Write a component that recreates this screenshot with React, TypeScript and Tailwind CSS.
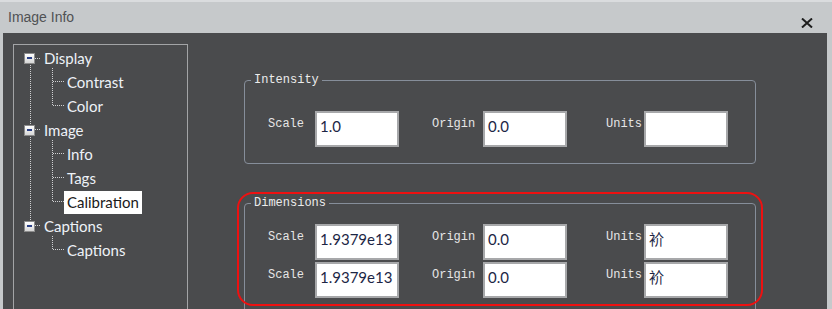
import { FC } from 'react';

const mono = { fontFamily: '"Liberation Mono", "DejaVu Sans Mono", monospace' };
const sans = { fontFamily: 'Lato, "Noto Sans", "Noto Sans CJK SC", sans-serif' };

type Node = { label: string; children: string[] };

const tree: Node[] = [
  { label: 'Display', children: ['Contrast', 'Color'] },
  { label: 'Image', children: ['Info', 'Tags', 'Calibration'] },
  { label: 'Captions', children: ['Captions'] },
];

const ExpandBox: FC = () => (
  <span className="w-[11px] h-[11px] border border-[#8c8c8c] bg-gradient-to-b from-[#ffffff] to-[#d6d6d6] flex items-center justify-center shrink-0">
    <span className="w-[5px] h-[2px] bg-[#2a3f86]" />
  </span>
);

// dotted connector lines of the tree view
const TreeLines: FC = () => {
  const dot = { stroke: '#cfd0d2', strokeWidth: 1, strokeDasharray: '1 1' };
  const childH = [37, 61, 109, 133, 157, 205];
  return (
    <svg className="absolute left-0 top-[-1px]" width="173" height="240" shapeRendering="crispEdges">
      <line x1="16.5" y1="19" x2="16.5" y2="176" {...dot} />
      {[14, 85, 181].map((y) => (
        <line key={y} x1="21" y1={y + 0.5} x2="27" y2={y + 0.5} {...dot} />
      ))}
      <line x1="38.5" y1="24" x2="38.5" y2="62" {...dot} />
      <line x1="38.5" y1="96" x2="38.5" y2="158" {...dot} />
      <line x1="38.5" y1="192" x2="38.5" y2="206" {...dot} />
      {childH.map((y) => (
        <line key={y} x1="39" y1={y + 0.5} x2="50" y2={y + 0.5} {...dot} />
      ))}
    </svg>
  );
};

const TreePanel: FC = () => (
  <div className="ml-[10px] mt-[11px] w-[175px] h-[300px] border border-[#a3a4a6] shrink-0">
    <div className="relative pt-[1px]" style={sans}>
      <TreeLines />
      {tree.map((node) => (
        <div key={node.label}>
          <div className="relative h-[24px] flex items-center pl-[10px]">
            <ExpandBox />
            <span className="ml-[6px] px-[3px] text-[15px] text-[#eef2f8] leading-[22px]">{node.label}</span>
          </div>
          {node.children.map((c) => (
            <div key={c} className="relative h-[24px] flex items-center pl-[50px]">
              <span
                className={
                  c === 'Calibration'
                    ? 'px-[3px] text-[15px] leading-[23px] bg-white text-[#1a1a1a]'
                    : 'px-[3px] text-[15px] leading-[23px] text-[#eef2f8]'
                }
              >
                {c}
              </span>
            </div>
          ))}
        </div>
      ))}
    </div>
  </div>
);

const Field: FC<{ value?: string }> = ({ value }) => (
  <div
    className="w-[84px] h-[36px] bg-white border-2 border-[#a7a8aa] flex items-center pl-[3px] pb-[6px] text-[15px] text-[#1c2645] shrink-0"
    style={sans}
  >
    {value}
  </div>
);

const Label: FC<{ text: string; className: string }> = ({ text, className }) => (
  <span className={'text-[12px] leading-[14px] text-[#e6e6e6] mb-[10px] shrink-0 ' + className} style={mono}>
    {text}
  </span>
);

const FieldRow: FC<{ scale: string; origin: string; units: string }> = ({ scale, origin, units }) => (
  <div className="flex items-center">
    <Label text="Scale" className="ml-[23px] w-[36px]" />
    <div className="ml-[11px]">
      <Field value={scale} />
    </div>
    <Label text="Origin" className="ml-[33px] w-[44px]" />
    <div className="ml-[7px]">
      <Field value={origin} />
    </div>
    <Label text="Units" className="ml-[39px] w-[36px]" />
    <div className="ml-[2px]">
      <Field value={units} />
    </div>
  </div>
);

const Group: FC<{ title: string; className: string; children: React.ReactNode }> = ({ title, className, children }) => (
  <fieldset className={'w-[512px] border border-[#868e9a] rounded-[4px] ' + className}>
    <legend className="ml-[6px] px-[3px] text-[12px] leading-[14px] text-[#ececec]" style={mono}>
      {title}
    </legend>
    {children}
  </fieldset>
);

export default function App() {
  return (
    <div className="relative w-[832px] h-[309px] bg-[#c6c9cb] overflow-hidden">
      <div className="h-[33px] border-t-2 border-[#dadcde] flex items-start justify-between">
        <span
          className="ml-[8px] mt-[7px] text-[14px] leading-[16px] text-[#505254]"
          style={{ fontFamily: '"Liberation Sans", Arial, sans-serif' }}
        >
          Image Info
        </span>
        <svg className="mr-[19px] mt-[16px]" width="12" height="10" viewBox="0 0 12 10">
          <path d="M1 0.5 L11 9.5 M11 0.5 L1 9.5" stroke="#1e1e1e" strokeWidth="2" />
        </svg>
      </div>
      <div className="ml-[3px] w-[824px] h-[276px] bg-[#4a4b4d] flex items-start">
        <TreePanel />
        <div className="ml-[56px] mt-[40px] flex flex-col">
          <Group title="Intensity" className="pt-[24px] pb-[16px]">
            <FieldRow scale="1.0" origin="0.0" units="" />
          </Group>
          <Group title="Dimensions" className="mt-[32px] pt-[14px] pb-[20px]">
            <div className="flex flex-col gap-[2px]">
              <FieldRow scale="1.9379e13" origin="0.0" units="衸" />
              <FieldRow scale="1.9379e13" origin="0.0" units="衸" />
            </div>
          </Group>
        </div>
      </div>
      <div className="absolute left-[237px] top-[192px] w-[526px] h-[114px] border-2 border-[#ee1111] rounded-[16px] pointer-events-none" />
    </div>
  );
}
